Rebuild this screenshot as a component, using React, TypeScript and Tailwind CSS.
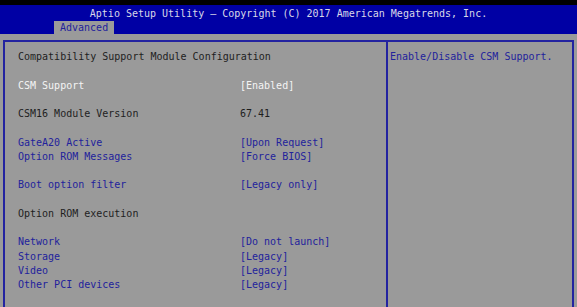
type Row = {
  label?: string;
  value?: string;
  tone?: "dark" | "white" | "blue";
};

const rows: Row[] = [
  { label: "Compatibility Support Module Configuration", tone: "dark" },
  {},
  { label: "CSM Support", value: "[Enabled]", tone: "white" },
  {},
  { label: "CSM16 Module Version", value: "67.41", tone: "dark" },
  {},
  { label: "GateA20 Active", value: "[Upon Request]", tone: "blue" },
  { label: "Option ROM Messages", value: "[Force BIOS]", tone: "blue" },
  {},
  { label: "Boot option filter", value: "[Legacy only]", tone: "blue" },
  {},
  { label: "Option ROM execution", tone: "dark" },
  {},
  { label: "Network", value: "[Do not launch]", tone: "blue" },
  { label: "Storage", value: "[Legacy]", tone: "blue" },
  { label: "Video", value: "[Legacy]", tone: "blue" },
  { label: "Other PCI devices", value: "[Legacy]", tone: "blue" },
];

const toneClass = {
  dark: "text-[#1e1e1e]",
  white: "text-[#f4f4f4]",
  blue: "text-[#22229c]",
};

export default function App() {
  return (
    <div
      className="flex h-[307px] w-[577px] flex-col overflow-hidden bg-[#9a9a9a] text-[10px] whitespace-pre"
      style={{ fontFamily: '"DejaVu Sans Mono", "Liberation Mono", monospace' }}
    >
      <div className="h-[5px] bg-black" />
      <div className="flex h-[29px] flex-col bg-[#0000a4]">
        <div className="mt-[2px] h-[14px] text-center leading-[14px] text-[#d8d8e8]">
          Aptio Setup Utility – Copyright (C) 2017 American Megatrends, Inc.
        </div>
        <div className="ml-[54px] mt-auto h-[14px] w-[60px] bg-[#9a9a9a] pl-[6px] leading-[14px] text-[#22229c]">
          Advanced
        </div>
      </div>
      <div className="mx-[3px] mt-[6px] flex flex-1 border-x-2 border-t-2 border-[#2323a0]">
        <div className="w-[381px] pl-[13px] pt-[8px]">
          {rows.map((r, i) => (
            <div
              key={i}
              className={`flex h-[14.25px] leading-[14.25px] ${r.tone ? toneClass[r.tone] : ""}`}
            >
              <span className="w-[222px]">{r.label ?? ""}</span>
              <span>{r.value ?? ""}</span>
            </div>
          ))}
        </div>
        <div className="flex-1 border-l-2 border-[#2323a0] pl-[2px] pt-[8px] leading-[14.25px] text-[#22229c]">
          Enable/Disable CSM Support.
        </div>
      </div>
    </div>
  );
}
